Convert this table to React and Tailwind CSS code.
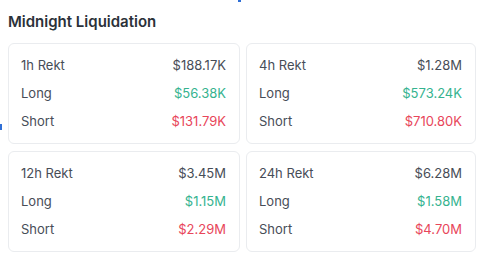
const periods = [
  { label: "1h Rekt", total: "$188.17K", long: "$56.38K", short: "$131.79K" },
  { label: "4h Rekt", total: "$1.28M", long: "$573.24K", short: "$710.80K" },
  { label: "12h Rekt", total: "$3.45M", long: "$1.15M", short: "$2.29M" },
  { label: "24h Rekt", total: "$6.28M", long: "$1.58M", short: "$4.70M" },
];

function Row({ label, value, tone }) {
  return (
    <div className="flex h-7 items-center justify-between">
      <span className="text-[#474d57]">{label}</span>
      <span className={tone}>{value}</span>
    </div>
  );
}

export default function App() {
  return (
    <div
      className="relative h-[253px] w-[477px] overflow-hidden bg-white px-2 text-[13px]"
      style={{ fontFamily: "Inter, 'Noto Sans', sans-serif" }}
    >
      {/* selection handles */}
      <span className="absolute left-0 top-[124px] h-[6px] w-[2px] bg-[#2f6fd6]" />
      <span className="absolute left-[238px] top-0 h-[2px] w-[3px] bg-[#2f6fd6]" />

      <h2 className="mb-[11px] pt-[12px] text-[15px] font-semibold leading-5 text-[#2b3139]">
        Midnight Liquidation
      </h2>

      <div className="grid grid-cols-[232px_230px] gap-x-[6px] gap-y-[7px]">
        {periods.map((p) => (
          <div
            key={p.label}
            className="rounded-md border border-[#eaecef] pb-[7px] pl-[12px] pr-[13px] pt-[8px]"
          >
            <Row label={p.label} value={p.total} tone="text-[#474d57]" />
            <Row label="Long" value={p.long} tone="text-[#35b38f]" />
            <Row label="Short" value={p.short} tone="text-[#e8465a]" />
          </div>
        ))}
      </div>
    </div>
  );
}
